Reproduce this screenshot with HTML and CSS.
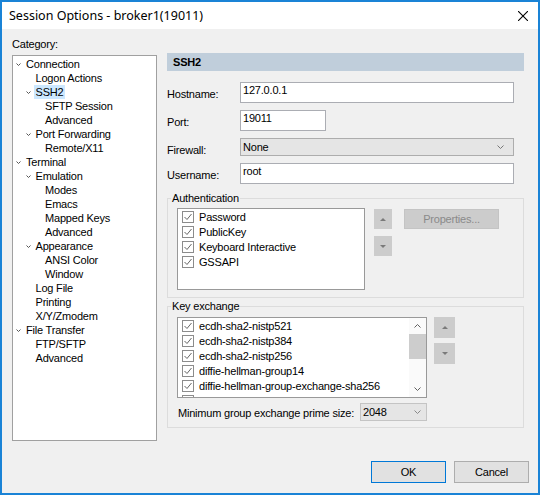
FILE: index.html
```html
<!DOCTYPE html>
<html lang="en">
<head>
    <meta charset="UTF-8">
    <meta name="viewport" content="width=device-width, initial-scale=1.0">
    <title>Session Options</title>
    <link rel="stylesheet" href="styles.css">
</head>
<body>
    <div class="window">
        <div class="titlebar">
            <span class="title">Session Options - broker1(19011)</span>
            <button class="close">
                <svg width="10" height="10" viewBox="0 0 10 10"><path d="M0 0L10 10M10 0L0 10" stroke="#000" stroke-width="1.1"/></svg>
            </button>
        </div>

        <div class="content">
            <div class="main">
                <div class="left">
                    <div class="cat-label">Category:</div>
                    <div class="tree">
                        <div class="node"><span class="twisty"><svg width="5" height="3" viewBox="0 0 5 3"><path d="M0.5 0.5L2.5 2.5L4.5 0.5" fill="none" stroke="#555"/></svg></span><span class="label">Connection</span></div>
                        <div class="node l1"><span class="twisty"></span><span class="label">Logon Actions</span></div>
                        <div class="node l1 sel"><span class="twisty"><svg width="5" height="3" viewBox="0 0 5 3"><path d="M0.5 0.5L2.5 2.5L4.5 0.5" fill="none" stroke="#555"/></svg></span><span class="label">SSH2</span></div>
                        <div class="node l2"><span class="twisty"></span><span class="label">SFTP Session</span></div>
                        <div class="node l2"><span class="twisty"></span><span class="label">Advanced</span></div>
                        <div class="node l1"><span class="twisty"><svg width="5" height="3" viewBox="0 0 5 3"><path d="M0.5 0.5L2.5 2.5L4.5 0.5" fill="none" stroke="#555"/></svg></span><span class="label">Port Forwarding</span></div>
                        <div class="node l2"><span class="twisty"></span><span class="label">Remote/X11</span></div>
                        <div class="node"><span class="twisty"><svg width="5" height="3" viewBox="0 0 5 3"><path d="M0.5 0.5L2.5 2.5L4.5 0.5" fill="none" stroke="#555"/></svg></span><span class="label">Terminal</span></div>
                        <div class="node l1"><span class="twisty"><svg width="5" height="3" viewBox="0 0 5 3"><path d="M0.5 0.5L2.5 2.5L4.5 0.5" fill="none" stroke="#555"/></svg></span><span class="label">Emulation</span></div>
                        <div class="node l2"><span class="twisty"></span><span class="label">Modes</span></div>
                        <div class="node l2"><span class="twisty"></span><span class="label">Emacs</span></div>
                        <div class="node l2"><span class="twisty"></span><span class="label">Mapped Keys</span></div>
                        <div class="node l2"><span class="twisty"></span><span class="label">Advanced</span></div>
                        <div class="node l1"><span class="twisty"><svg width="5" height="3" viewBox="0 0 5 3"><path d="M0.5 0.5L2.5 2.5L4.5 0.5" fill="none" stroke="#555"/></svg></span><span class="label">Appearance</span></div>
                        <div class="node l2"><span class="twisty"></span><span class="label">ANSI Color</span></div>
                        <div class="node l2"><span class="twisty"></span><span class="label">Window</span></div>
                        <div class="node l1"><span class="twisty"></span><span class="label">Log File</span></div>
                        <div class="node l1"><span class="twisty"></span><span class="label">Printing</span></div>
                        <div class="node l1"><span class="twisty"></span><span class="label">X/Y/Zmodem</span></div>
                        <div class="node"><span class="twisty"><svg width="5" height="3" viewBox="0 0 5 3"><path d="M0.5 0.5L2.5 2.5L4.5 0.5" fill="none" stroke="#555"/></svg></span><span class="label">File Transfer</span></div>
                        <div class="node l1"><span class="twisty"></span><span class="label">FTP/SFTP</span></div>
                        <div class="node l1"><span class="twisty"></span><span class="label">Advanced</span></div>
                    </div>
                </div>

                <div class="right">
                    <div class="header">SSH2</div>

                    <div class="fields">
                        <label>Hostname:</label>
                        <input class="text wide" value="127.0.0.1">
                        <label>Port:</label>
                        <input class="text port" value="19011">
                        <label class="fw">Firewall:</label>
                        <div class="combo wide">
                            <span>None</span>
                            <svg width="7" height="4" viewBox="0 0 7 4"><path d="M0.5 0.5L3.5 3.5L6.5 0.5" fill="none" stroke="#777"/></svg>
                        </div>
                        <label>Username:</label>
                        <input class="text wide" value="root">
                    </div>

                    <fieldset class="group">
                        <legend>Authentication</legend>
                        <div class="group-body auth">
                            <div class="list">
                                <div class="item"><svg class="cb" width="12" height="12" viewBox="0 0 12 12"><rect x="0.5" y="0.5" width="11" height="11" fill="#fff" stroke="#8c8c8c"/><path d="M2.5 6L5 8.5L9.5 3" fill="none" stroke="#666"/></svg>Password</div>
                                <div class="item"><svg class="cb" width="12" height="12" viewBox="0 0 12 12"><rect x="0.5" y="0.5" width="11" height="11" fill="#fff" stroke="#8c8c8c"/><path d="M2.5 6L5 8.5L9.5 3" fill="none" stroke="#666"/></svg>PublicKey</div>
                                <div class="item"><svg class="cb" width="12" height="12" viewBox="0 0 12 12"><rect x="0.5" y="0.5" width="11" height="11" fill="#fff" stroke="#8c8c8c"/><path d="M2.5 6L5 8.5L9.5 3" fill="none" stroke="#666"/></svg>Keyboard Interactive</div>
                                <div class="item"><svg class="cb" width="12" height="12" viewBox="0 0 12 12"><rect x="0.5" y="0.5" width="11" height="11" fill="#fff" stroke="#8c8c8c"/><path d="M2.5 6L5 8.5L9.5 3" fill="none" stroke="#666"/></svg>GSSAPI</div>
                            </div>
                            <div class="updown">
                                <button class="arrow up"></button>
                                <button class="arrow down"></button>
                            </div>
                            <button class="props" disabled>Properties...</button>
                        </div>
                    </fieldset>

                    <fieldset class="group kex">
                        <legend>Key exchange</legend>
                        <div class="group-body">
                            <div class="kex-row">
                                <div class="list">
                                    <div class="items">
                                        <div class="item"><svg class="cb" width="12" height="12" viewBox="0 0 12 12"><rect x="0.5" y="0.5" width="11" height="11" fill="#fff" stroke="#8c8c8c"/><path d="M2.5 6L5 8.5L9.5 3" fill="none" stroke="#666"/></svg>ecdh-sha2-nistp521</div>
                                        <div class="item"><svg class="cb" width="12" height="12" viewBox="0 0 12 12"><rect x="0.5" y="0.5" width="11" height="11" fill="#fff" stroke="#8c8c8c"/><path d="M2.5 6L5 8.5L9.5 3" fill="none" stroke="#666"/></svg>ecdh-sha2-nistp384</div>
                                        <div class="item"><svg class="cb" width="12" height="12" viewBox="0 0 12 12"><rect x="0.5" y="0.5" width="11" height="11" fill="#fff" stroke="#8c8c8c"/><path d="M2.5 6L5 8.5L9.5 3" fill="none" stroke="#666"/></svg>ecdh-sha2-nistp256</div>
                                        <div class="item"><svg class="cb" width="12" height="12" viewBox="0 0 12 12"><rect x="0.5" y="0.5" width="11" height="11" fill="#fff" stroke="#8c8c8c"/><path d="M2.5 6L5 8.5L9.5 3" fill="none" stroke="#666"/></svg>diffie-hellman-group14</div>
                                        <div class="item"><svg class="cb" width="12" height="12" viewBox="0 0 12 12"><rect x="0.5" y="0.5" width="11" height="11" fill="#fff" stroke="#8c8c8c"/><path d="M2.5 6L5 8.5L9.5 3" fill="none" stroke="#666"/></svg>diffie-hellman-group-exchange-sha256</div>
                                        <div class="item"><svg class="cb" width="12" height="12" viewBox="0 0 12 12"><rect x="0.5" y="0.5" width="11" height="11" fill="#fff" stroke="#8c8c8c"/><path d="M2.5 6L5 8.5L9.5 3" fill="none" stroke="#666"/></svg>diffie-hellman-group1</div>
                                    </div>
                                    <div class="vscroll">
                                        <div class="sb-btn"><svg width="7" height="4" viewBox="0 0 7 4"><path d="M0.5 3.5L3.5 0.5L6.5 3.5" fill="none" stroke="#606060"/></svg></div>
                                        <div class="sb-track"><div class="thumb"></div></div>
                                        <div class="sb-btn"><svg width="7" height="4" viewBox="0 0 7 4"><path d="M0.5 0.5L3.5 3.5L6.5 0.5" fill="none" stroke="#606060"/></svg></div>
                                    </div>
                                </div>
                                <div class="updown">
                                    <button class="arrow up"></button>
                                    <button class="arrow down"></button>
                                </div>
                            </div>
                            <div class="min-row">
                                <label>Minimum group exchange prime size:</label>
                                <div class="combo small">
                                    <span>2048</span>
                                    <svg width="7" height="4" viewBox="0 0 7 4"><path d="M0.5 0.5L3.5 3.5L6.5 0.5" fill="none" stroke="#888"/></svg>
                                </div>
                            </div>
                        </div>
                    </fieldset>
                </div>
            </div>

            <div class="footer">
                <button class="btn default">OK</button>
                <button class="btn">Cancel</button>
            </div>
        </div>
    </div>
</body>
</html>
```

FILE: styles.css
```css
*{
    box-sizing: border-box;
}
body{
    margin: 0;
    font-family: "Liberation Sans", Arial, sans-serif;
    font-size: 11px;
    letter-spacing: -0.2px;
    color: #000;
}
.window{
    width: 540px;
    height: 495px;
    border: 2px solid #1a83d6;
    background-color: #f0f0f0;
    display: flex;
    flex-direction: column;
}
.titlebar{
    flex: none;
    height: 27px;
    background-color: white;
    display: flex;
    align-items: center;
    justify-content: space-between;
    padding-left: 7px;
}
.title{
    font-family: "Noto Sans", sans-serif;
    font-size: 12.5px;
    letter-spacing: 0;
}
.close{
    width: 30px;
    height: 27px;
    border: none;
    background: none;
    padding: 0;
    display: flex;
    align-items: center;
    justify-content: center;
}

.content{
    flex: 1;
    display: flex;
    flex-direction: column;
    padding: 8px 9px 10px 10px;
}
.main{
    display: flex;
    gap: 10px;
    height: 404px;
}

/* category tree */
.left{
    width: 145px;
    display: flex;
    flex-direction: column;
}
.cat-label{
    line-height: 14px;
    margin-bottom: 4px;
}
.tree{
    flex: 1;
    background-color: white;
    border: 1px solid #a0a0a0;
    padding-top: 1px;
}
.node{
    display: flex;
    height: 14px;
    line-height: 14px;
}
.l1{ padding-left: 9.5px; }
.l2{ padding-left: 19px; }
.twisty{
    width: 11px;
    display: flex;
    align-items: center;
    justify-content: center;
    padding-top: 1px;
}
.label{
    padding: 0 2px;
}
.sel .label{
    background-color: #cce8ff;
}

/* right side */
.right{
    width: 357px;
    padding-top: 16px;
}
.header{
    height: 18px;
    line-height: 18px;
    background-color: #c0cedb;
    font-weight: bold;
    padding-left: 6px;
}
.fields{
    display: grid;
    grid-template-columns: 73px 274px;
    grid-template-rows: 21px 21px 18px 21px;
    row-gap: 7px;
    margin-top: 11px;
}
.fields label{
    align-self: center;
    padding-top: 3px;
    line-height: 14px;
}
.fields label.fw{
    padding-top: 6px;
}
.text{
    height: 21px;
    border: 1px solid #abadb3;
    background-color: white;
    padding: 0 2px 5px;
    font: inherit;
    letter-spacing: inherit;
    outline: none;
}
.wide{ width: 274px; }
.port{ width: 86px; }

.combo{
    display: flex;
    align-items: center;
    justify-content: space-between;
    height: 18px;
    border: 1px solid #adadad;
    background-color: #e5e5e5;
    padding: 0 9px 0 2px;
}
.combo.small{
    width: 67px;
    border-color: #c4c4c4;
    padding-right: 5px;
}

.group{
    margin: 7px 0 0;
    padding: 0;
    min-width: 0;
    border: 1px solid #dcdcdc;
}
.group legend{
    margin-left: 3px;
    padding: 0 1px;
    line-height: 14px;
}
.group.kex{
    margin-top: 1px;
}
.group-body{
    padding: 3px 0 7px 9px;
    display: flex;
}
.kex .group-body{
    padding: 4px 0 6px 9px;
    flex-direction: column;
}

.list{
    background-color: white;
    border: 1px solid #999;
}
.auth .list{
    width: 188px;
    height: 82px;
    padding-left: 4px;
}
.item{
    display: flex;
    align-items: center;
    gap: 5px;
    height: 15px;
    white-space: nowrap;
}
.cb{
    flex: none;
}

.updown{
    display: flex;
    flex-direction: column;
    gap: 7px;
    margin: 1px 0 0 9px;
}
.arrow{
    width: 18px;
    height: 20px;
    border: none;
    padding: 0;
    background-color: #cccccc;
    display: flex;
    align-items: center;
    justify-content: center;
}
.arrow::after{
    content: "";
    border-left: 3px solid transparent;
    border-right: 3px solid transparent;
}
.arrow.up::after{
    border-bottom: 3px solid #7a7a7a;
}
.arrow.down::after{
    border-top: 3px solid #7a7a7a;
}
.props{
    width: 95px;
    height: 20px;
    margin: 1px 0 0 12px;
    border: 1px solid #c4c4c4;
    background-color: #cccccc;
    color: #8a8a8a;
    font: inherit;
    letter-spacing: inherit;
    padding: 0;
}

.kex-row{
    display: flex;
}
.kex .list{
    width: 250px;
    height: 81px;
    display: flex;
}
.items{
    flex: 1;
    overflow: hidden;
    padding-left: 4px;
}
.vscroll{
    width: 17px;
    display: flex;
    flex-direction: column;
    background-color: #fafafa;
}
.sb-btn{
    height: 16px;
    display: flex;
    align-items: center;
    justify-content: center;
}
.sb-track{
    flex: 1;
}
.thumb{
    height: 25px;
    background-color: #cdcdcd;
}
.kex .updown{
    gap: 5px;
    margin: 0 0 0 7px;
}
.kex .arrow{
    width: 21px;
    height: 21px;
}
.min-row{
    display: flex;
    align-items: center;
    margin-top: 5px;
    padding-left: 1px;
}
.min-row label{
    width: 182px;
    padding-top: 2px;
}

.footer{
    display: flex;
    justify-content: flex-end;
    gap: 8px;
    margin-top: 20px;
}
.btn{
    width: 75px;
    height: 22px;
    border: 1px solid #adadad;
    background-color: #e1e1e1;
    font: inherit;
    letter-spacing: inherit;
    padding: 0;
}
.btn.default{
    border-color: #0078d7;
}
```
